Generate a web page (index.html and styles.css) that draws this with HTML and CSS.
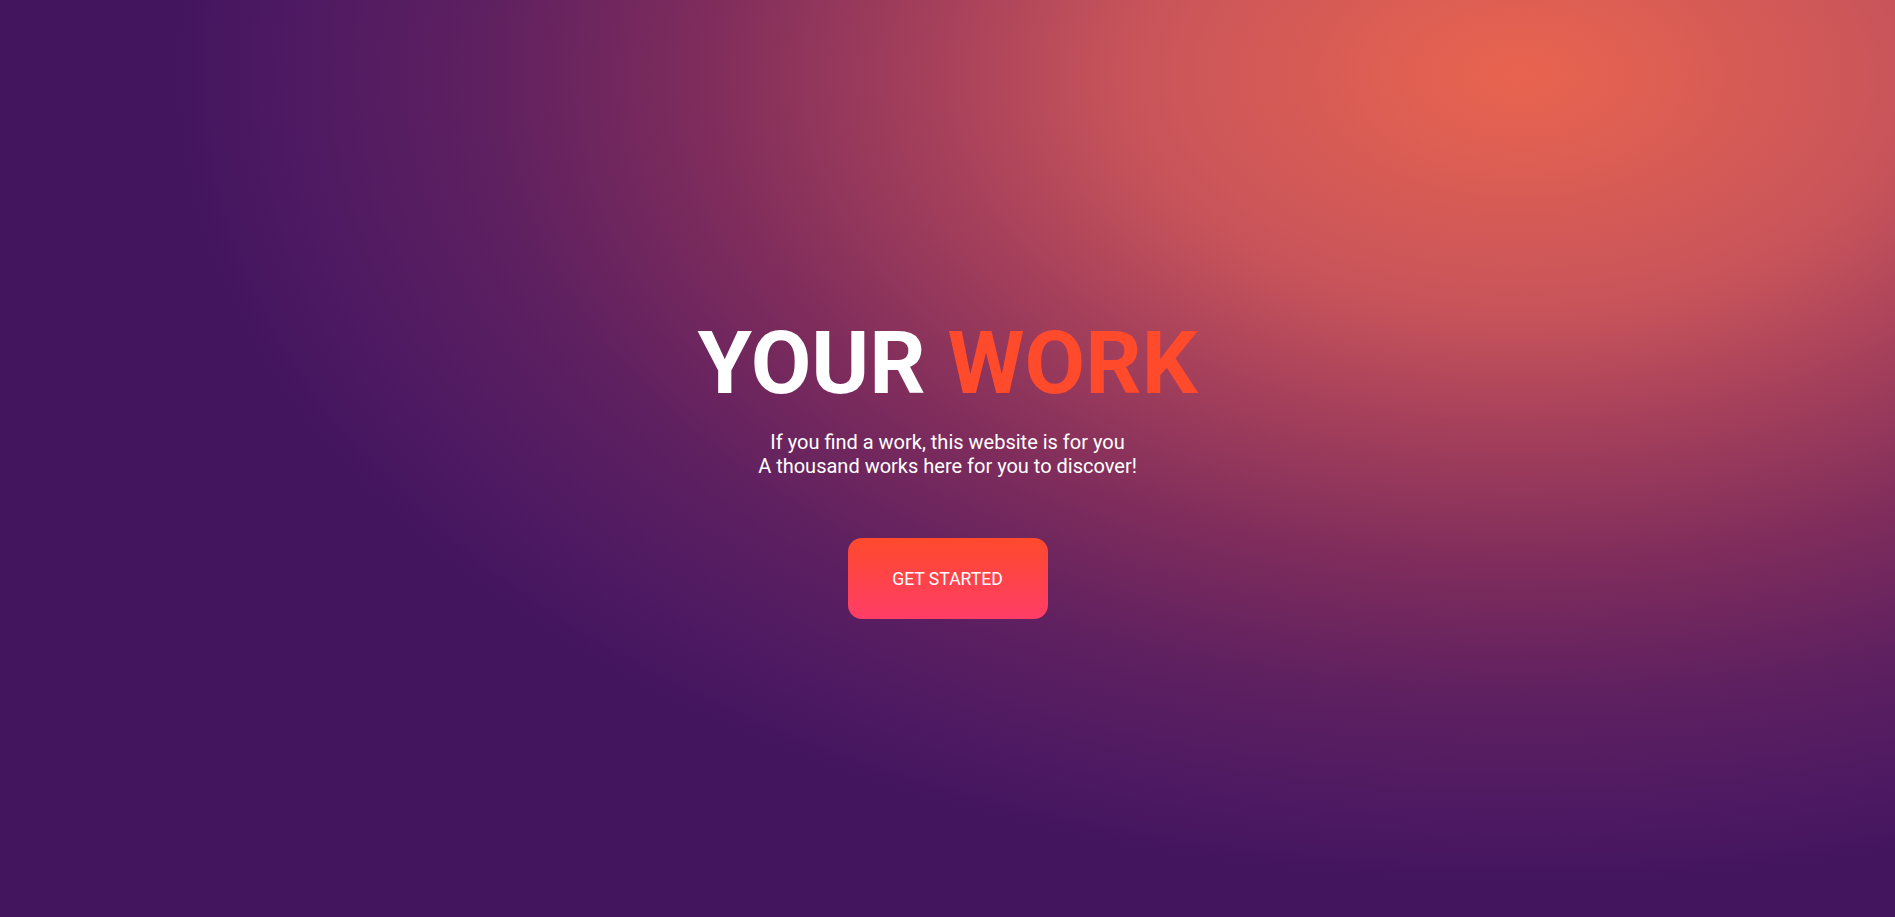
FILE: index.html
```html
<!DOCTYPE html>
<html lang="en">
<head>
<meta charset="utf-8">
<title>Your Work</title>
<link rel="stylesheet" href="styles.css">
</head>
<body>
<main class="hero">
  <div class="hero-text">
    <h1 class="title">YOUR <span class="accent">WORK</span></h1>
    <p class="lead">If you find a work, this website is for you<br>A thousand works here for you to discover!</p>
  </div>
  <a class="cta" href="#">GET STARTED</a>
</main>
</body>
</html>
```
FILE: styles.css
```css
html, body {
  margin: 0;
  padding: 0;
  height: 100%;
}
body {
  font-family: Roboto, "Liberation Sans", Arial, sans-serif;
  color: #fff;
  background-color: #42155f;
  background-image: radial-gradient(ellipse 1350px 810px at 1520px 75px,
    #e9644f 0%,
    #c8545a 29%,
    #a7415b 43%,
    #7e2c5c 61%,
    #5e2060 77%,
    #4f1a62 90%,
    #43155f 100%);
  overflow: hidden;
}
.hero {
  box-sizing: border-box;
  min-height: 100vh;
  padding-top: 21px;
  display: flex;
  flex-direction: column;
  align-items: center;
  justify-content: center;
}
.hero-text {
  width: 100%;
  text-align: center;
}
.title {
  margin: 0;
  font-size: 88px;
  line-height: 1;
  font-weight: 700;
  color: #fff;
}
.accent {
  color: #ff4a2b;
}
.lead {
  margin: 23px 0 0;
  font-size: 20px;
  line-height: 24px;
  font-weight: 400;
}
.cta {
  margin-top: 60px;
  width: 200px;
  height: 81px;
  display: flex;
  align-items: center;
  justify-content: center;
  border-radius: 14px;
  background: linear-gradient(180deg, #ff4a2c 0%, #ff3d67 100%);
  color: #fff;
  font-size: 17.6px;
  text-decoration: none;
}
```
